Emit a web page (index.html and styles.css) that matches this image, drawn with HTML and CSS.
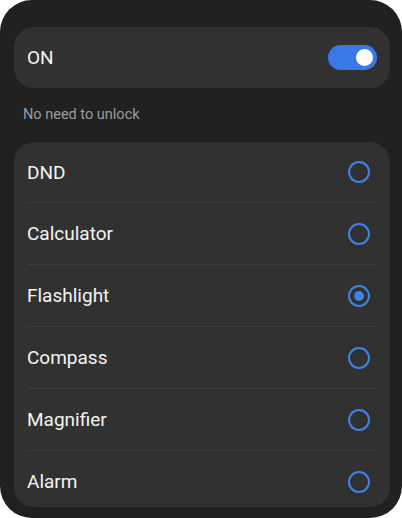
FILE: index.html
```html
<!DOCTYPE html>
<html lang="en">
<head>
	<meta charset="UTF-8" />
	<meta name="viewport" content="width=device-width, initial-scale=1.0" />
	<title>Quick access</title>
	<link rel="stylesheet" href="styles.css">
</head>
<body>
<div class="panel">
	<div class="switch-card">
		<span class="switch-label">ON</span>
		<span class="toggle"><span class="knob"></span></span>
	</div>

	<p class="hint">No need to unlock</p>

	<ul class="options">
		<li class="option"><span>DND</span><span class="radio"></span></li>
		<li class="option"><span>Calculator</span><span class="radio"></span></li>
		<li class="option"><span>Flashlight</span><span class="radio checked"></span></li>
		<li class="option"><span>Compass</span><span class="radio"></span></li>
		<li class="option"><span>Magnifier</span><span class="radio"></span></li>
		<li class="option"><span>Alarm</span><span class="radio"></span></li>
	</ul>
</div>
</body>
</html>
```

FILE: styles.css
```css
body {
	margin: 0;
	background: #ffffff;
	font-family: Roboto, "Noto Sans", sans-serif;
}
.panel {
	box-sizing: border-box;
	width: 402px;
	height: 518px;
	background: #212121;
	border-radius: 32px;
	padding: 27px 12px 0 14px;
	overflow: hidden;
}
.switch-card {
	display: flex;
	align-items: center;
	justify-content: space-between;
	height: 61px;
	background: #313131;
	border-radius: 20px;
	padding: 0 13px 0 13px;
}
.switch-label {
	color: #f4f4f4;
	font-size: 19px;
}
.toggle {
	display: flex;
	align-items: center;
	justify-content: flex-end;
	width: 49px;
	height: 25px;
	box-sizing: border-box;
	padding-right: 4px;
	background: #3b78e7;
	border-radius: 13px;
}
.knob {
	width: 17px;
	height: 17px;
	border-radius: 50%;
	background: #ffffff;
}
.hint {
	margin: 0;
	height: 54px;
	line-height: 54px;
	padding-left: 9px;
	color: #9c9c9c;
	font-size: 14.5px;
}
.options {
	list-style: none;
	margin: 0;
	padding: 0 14px 0 13px;
	height: 365px;
	background: #313131;
	border-radius: 20px;
	overflow: hidden;
}
.option {
	box-sizing: border-box;
	display: flex;
	align-items: center;
	justify-content: space-between;
	height: 62px;
	color: #f4f4f4;
	font-size: 19px;
	border-top: 1px solid #3d3d3d;
}
.option:first-child {
	border-top: none;
	height: 60px;
}
.radio {
	box-sizing: border-box;
	width: 22px;
	height: 22px;
	margin-right: 6px;
	border: 2px solid #3f83e6;
	border-radius: 50%;
	display: flex;
	align-items: center;
	justify-content: center;
}
.radio.checked::after {
	content: "";
	width: 10px;
	height: 10px;
	border-radius: 50%;
	background: #3f83e6;
}
```
